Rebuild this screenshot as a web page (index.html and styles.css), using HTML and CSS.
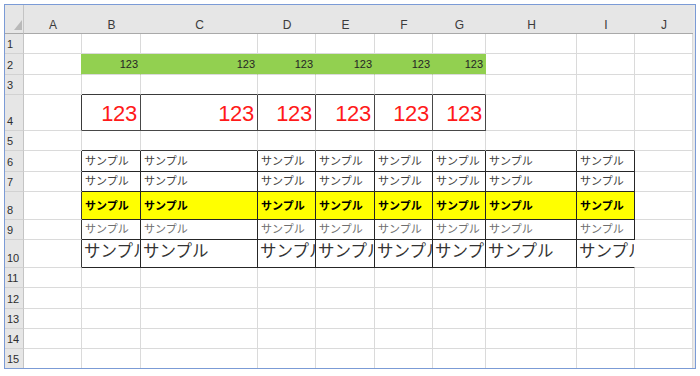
FILE: index.html
```html
<!DOCTYPE html>
<html lang="ja">
<head>
<meta charset="utf-8">
<title>Sheet</title>
<link rel="stylesheet" href="styles.css">
</head>
<body>
<div class="frame">
  <div class="sheet">
    <div class="row h29 hdr">
      <div class="corner"><svg width="8" height="10" viewBox="0 0 8 10"><polygon points="8,0 8,10 0,10" fill="#b9b9b9"/></svg></div>
      <div class="ch">A</div><div class="ch">B</div><div class="ch">C</div><div class="ch">D</div><div class="ch">E</div><div class="ch">F</div><div class="ch">G</div><div class="ch">H</div><div class="ch">I</div><div class="ch">J</div>
    </div>

    <div class="row h20">
      <div class="rh">1</div>
      <div class="c"></div><div class="c"></div><div class="c"></div><div class="c"></div><div class="c"></div><div class="c"></div><div class="c"></div><div class="c"></div><div class="c"></div><div class="c"></div>
    </div>

    <div class="row h21">
      <div class="rh">2</div>
      <div class="c gr"></div>
      <div class="c g gr num">123</div>
      <div class="c g gr num">123</div>
      <div class="c g gr num">123</div>
      <div class="c g gr num">123</div>
      <div class="c g gr num">123</div>
      <div class="c g gr num">123</div>
      <div class="c"></div><div class="c"></div><div class="c"></div>
    </div>

    <div class="row h20">
      <div class="rh">3</div>
      <div class="c"></div>
      <div class="c db"></div><div class="c db"></div><div class="c db"></div><div class="c db"></div><div class="c db"></div><div class="c db"></div>
      <div class="c"></div><div class="c"></div><div class="c"></div>
    </div>

    <div class="row h36">
      <div class="rh">4</div>
      <div class="c dr"></div>
      <div class="c box big">123</div>
      <div class="c box big">123</div>
      <div class="c box big">123</div>
      <div class="c box big">123</div>
      <div class="c box big">123</div>
      <div class="c box big">123</div>
      <div class="c"></div><div class="c"></div><div class="c"></div>
    </div>

    <div class="row h20">
      <div class="rh">5</div>
      <div class="c"></div>
      <div class="c db"></div><div class="c db"></div><div class="c db"></div><div class="c db"></div><div class="c db"></div><div class="c db"></div><div class="c db"></div><div class="c db"></div>
      <div class="c"></div>
    </div>

    <div class="row h21">
      <div class="rh">6</div>
      <div class="c dr"></div>
      <div class="c tb jp">サンプル</div><div class="c tb jp">サンプル</div><div class="c tb jp">サンプル</div><div class="c tb jp">サンプル</div><div class="c tb jp">サンプル</div><div class="c tb jp">サンプル</div><div class="c tb jp">サンプル</div><div class="c tb jp">サンプル</div>
      <div class="c"></div>
    </div>

    <div class="row h20">
      <div class="rh">7</div>
      <div class="c dr"></div>
      <div class="c tb jp">サンプル</div><div class="c tb jp">サンプル</div><div class="c tb jp">サンプル</div><div class="c tb jp">サンプル</div><div class="c tb jp">サンプル</div><div class="c tb jp">サンプル</div><div class="c tb jp">サンプル</div><div class="c tb jp">サンプル</div>
      <div class="c"></div>
    </div>

    <div class="row h28">
      <div class="rh">8</div>
      <div class="c dr"></div>
      <div class="c tb y jpb">サンプル</div><div class="c tb y jpb">サンプル</div><div class="c tb y jpb">サンプル</div><div class="c tb y jpb">サンプル</div><div class="c tb y jpb">サンプル</div><div class="c tb y jpb">サンプル</div><div class="c tb y jpb">サンプル</div><div class="c tb y jpb">サンプル</div>
      <div class="c"></div>
    </div>

    <div class="row h20">
      <div class="rh">9</div>
      <div class="c dr"></div>
      <div class="c tb jpl">サンプル</div><div class="c tb jpl">サンプル</div><div class="c tb jpl">サンプル</div><div class="c tb jpl">サンプル</div><div class="c tb jpl">サンプル</div><div class="c tb jpl">サンプル</div><div class="c tb jpl">サンプル</div><div class="c tb jpl">サンプル</div>
      <div class="c"></div>
    </div>

    <div class="row h28">
      <div class="rh">10</div>
      <div class="c dr"></div>
      <div class="c tb jpx">サンプル</div><div class="c tb jpx">サンプル</div><div class="c tb jpx">サンプル</div><div class="c tb jpx">サンプル</div><div class="c tb jpx">サンプル</div><div class="c tb jpx">サンプル</div><div class="c tb jpx">サンプル</div><div class="c tb jpx ovf">サンプル</div>
      <div class="c"></div>
    </div>

    <div class="row h20">
      <div class="rh">11</div>
      <div class="c"></div><div class="c"></div><div class="c"></div><div class="c"></div><div class="c"></div><div class="c"></div><div class="c"></div><div class="c"></div><div class="c"></div><div class="c"></div>
    </div>
    <div class="row h21">
      <div class="rh">12</div>
      <div class="c"></div><div class="c"></div><div class="c"></div><div class="c"></div><div class="c"></div><div class="c"></div><div class="c"></div><div class="c"></div><div class="c"></div><div class="c"></div>
    </div>
    <div class="row h20">
      <div class="rh">13</div>
      <div class="c"></div><div class="c"></div><div class="c"></div><div class="c"></div><div class="c"></div><div class="c"></div><div class="c"></div><div class="c"></div><div class="c"></div><div class="c"></div>
    </div>
    <div class="row h20">
      <div class="rh">14</div>
      <div class="c"></div><div class="c"></div><div class="c"></div><div class="c"></div><div class="c"></div><div class="c"></div><div class="c"></div><div class="c"></div><div class="c"></div><div class="c"></div>
    </div>
    <div class="row h20">
      <div class="rh">15</div>
      <div class="c"></div><div class="c"></div><div class="c"></div><div class="c"></div><div class="c"></div><div class="c"></div><div class="c"></div><div class="c"></div><div class="c"></div><div class="c"></div>
    </div>
  </div>
</div>
</body>
</html>
```

FILE: styles.css
```css
html, body {
  margin: 0;
  padding: 0;
  background: #ffffff;
}
body {
  padding: 4px 0 0 4px;
  font-family: "Liberation Sans", Arial, sans-serif;
}
.frame {
  width: 690px;
  height: 363px;
  border: 1px solid #7b9bd6;
  background: #e9e9e9;
  overflow: hidden;
}
.sheet {
  width: 688px;
  height: 363px;
  overflow: hidden;
  background: #ffffff;
}
.row {
  display: grid;
  grid-template-columns: 19px 58px 59px 117px 58px 59px 58px 53px 91px 58px 58px;
}
.h20 { height: 20px; }
.h21 { height: 21px; }
.h28 { height: 28px; }
.h29 { height: 29px; }
.h36 { height: 36px; }

.row > div {
  box-sizing: border-box;
  min-width: 0;
  display: flex;
  align-items: flex-end;
  overflow: hidden;
  white-space: nowrap;
}

/* header */
.hdr > div {
  background: #e6e6e6;
  border-bottom: 1px solid #a9a9a9;
}
.corner {
  justify-content: flex-end;
  padding: 0 1px 3px 0;
  border-right: 1px solid #c4c4c4;
}
.corner svg { display: block; }
.ch {
  justify-content: center;
  font-size: 12px;
  line-height: 1;
  color: #3b3b3b;
  padding-bottom: 2px;
  background: linear-gradient(#d2d2d2, #c6c6c6) right bottom / 1px 20px no-repeat, #e6e6e6;
}
.rh {
  background: #e6e6e6;
  border-right: 1px solid #c4c4c4;
  border-bottom: 1px solid #d2d2d2;
  font-size: 11px;
  line-height: 1;
  color: #2e2e2e;
  padding: 0 0 3px 2px;
}

/* cells */
.c {
  border-right: 1px solid #dadada;
  border-bottom: 1px solid #dadada;
}
.dr { border-right-color: #3a3a3a; }
.db { border-bottom-color: #3a3a3a; }
.box {
  border-right-color: #474747;
  border-bottom-color: #474747;
}
.tb {
  border-right-color: #262626;
  border-bottom-color: #262626;
}
.g { background: #92d050; }
.gr { border-right-color: #92d050; }
.y { background: #ffff00; }

.num {
  justify-content: flex-end;
  font-size: 11px;
  line-height: 1;
  color: #262626;
  padding: 0 2px 4px 0;
}
.big {
  justify-content: flex-end;
  font-size: 22px;
  line-height: 1;
  letter-spacing: -0.3px;
  color: #ff1a1a;
  padding: 0 3px 5px 0;
}
.jp, .jpb, .jpl, .jpx {
  font-family: "Noto Sans CJK JP", "Noto Sans", sans-serif;
  line-height: 1;
}
.jp {
  font-size: 11px;
  color: #404040;
  padding: 0 0 5px 3px;
}
.jpb {
  font-size: 11px;
  font-weight: bold;
  color: #000000;
  padding: 0 0 8px 3px;
}
.jpl {
  font-size: 11px;
  color: #6e6e6e;
  padding: 0 0 5px 3px;
}
.jpx {
  font-size: 16.5px;
  color: #333333;
  padding: 0 0 9px 2px;
}
.ovf {
  overflow: visible;
  border-right-color: transparent;
}
```
